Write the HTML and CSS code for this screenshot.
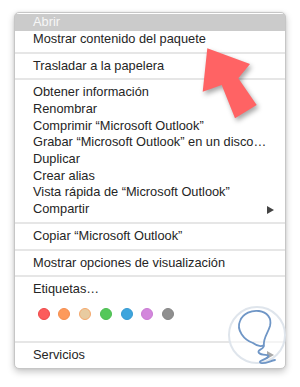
FILE: index.html
```html
<!DOCTYPE html>
<html lang="es">
<head>
<meta charset="utf-8">
<title>Menú contextual</title>
<link rel="stylesheet" href="styles.css">
</head>
<body>
<div class="page">
  <div class="menu">
    <div class="item active">Abrir</div>
    <div class="item">Mostrar contenido del paquete</div>
    <div class="sep"></div>
    <div class="item">Trasladar a la papelera</div>
    <div class="sep"></div>
    <div class="item">Obtener información</div>
    <div class="item">Renombrar</div>
    <div class="item">Comprimir “Microsoft Outlook”</div>
    <div class="item">Grabar “Microsoft Outlook” en un disco…</div>
    <div class="item">Duplicar</div>
    <div class="item">Crear alias</div>
    <div class="item">Vista rápida de “Microsoft Outlook”</div>
    <div class="item sub">Compartir<span class="tri"></span></div>
    <div class="sep"></div>
    <div class="item">Copiar “Microsoft Outlook”</div>
    <div class="sep"></div>
    <div class="item">Mostrar opciones de visualización</div>
    <div class="sep"></div>
    <div class="item">Etiquetas…</div>
    <div class="tags">
      <span class="dot red"></span>
      <span class="dot orange"></span>
      <span class="dot tan"></span>
      <span class="dot green"></span>
      <span class="dot blue"></span>
      <span class="dot purple"></span>
      <span class="dot gray"></span>
    </div>
    <div class="sep"></div>
    <div class="item sub">Servicios<span class="tri"></span></div>
  </div>
  <svg class="overlay" width="300" height="387" viewBox="0 0 300 387">
    <polygon class="arrow" points="207.3,48.3 250,64 238.3,78.3 256.7,105 235,118.3 221.7,85 202.7,91.7" />
    <circle class="wm-circle" cx="257" cy="335" r="28" />
    <path class="wm-line" d="M 253 343 C 244 340, 236 330, 240 321 C 243 313, 252 310, 259 311 C 267 312, 272 318, 270 326 C 268 333, 263 338, 264 345 C 265 349, 256 350, 259 353 C 262 356, 271 354, 268 357 C 265 360, 257 361, 261 363 C 265 364, 270 361, 275 360 M 253 343 C 257 346, 261 347, 264 345" />
  </svg>
</div>
</body>
</html>
```

FILE: styles.css
```css
html, body {
  margin: 0;
  padding: 0;
  background: #ffffff;
}

.page {
  position: relative;
  width: 300px;
  height: 387px;
  padding: 12px 0 0 14px;
  box-sizing: border-box;
}

.menu {
  width: 272px;
  box-sizing: border-box;
  background: #ffffff;
  border: 1px solid #c6c6c6;
  border-radius: 5px;
  padding: 1.3px 0 4px 0;
  box-shadow: 0 3px 7px rgba(0, 0, 0, 0.22), 0 0 3px rgba(0, 0, 0, 0.08);
  font-family: "Liberation Sans", Arial, sans-serif;
  font-size: 12.8px;
  color: #252525;
}

.item {
  height: 16.7px;
  line-height: 16.7px;
  padding-left: 18px;
  white-space: nowrap;
  display: flex;
  align-items: center;
  justify-content: space-between;
  padding-right: 11px;
}

.item.active {
  background: #cbcbcb;
  color: #f7f7f7;
}

.sep {
  height: 2px;
  background: #e6e6e6;
  margin: 4px 0;
}

.tri {
  width: 0;
  height: 0;
  border-top: 4px solid transparent;
  border-bottom: 4px solid transparent;
  border-left: 7px solid #444444;
}

.tags {
  display: flex;
  gap: 8.8px;
  padding: 10px 0 16.9px 22.5px;
}

.dot {
  width: 12px;
  height: 12px;
  border-radius: 50%;
  box-sizing: border-box;
  border: 1px solid transparent;
}

.dot.red { background: #fc5c5c; border-color: #ee4949; }
.dot.orange { background: #fd9a5c; border-color: #f58e4e; }
.dot.tan { background: #e8cba0; border-color: #f5a86c; }
.dot.green { background: #55c85a; border-color: #4cbd51; }
.dot.blue { background: #3ea5dd; border-color: #379ad2; }
.dot.purple { background: #d387dc; border-color: #c97bd3; }
.dot.gray { background: #8f8f8f; border-color: #868686; }

.overlay {
  position: absolute;
  left: 0;
  top: 0;
  pointer-events: none;
}

.arrow {
  fill: #ff6364;
  filter: drop-shadow(2px 3px 2.5px rgba(0, 0, 0, 0.35));
}

.wm-circle {
  fill: rgba(255, 255, 255, 0.55);
  stroke: #dfe5ec;
  stroke-width: 2;
}

.wm-line {
  fill: none;
  stroke: #6f96c6;
  stroke-width: 1.8;
  stroke-linecap: round;
  stroke-linejoin: round;
}
```
